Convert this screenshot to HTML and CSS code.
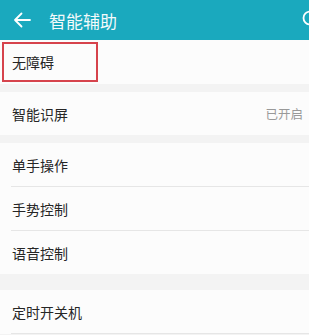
FILE: index.html
```html
<!DOCTYPE html>
<html>
<head>
  <meta charset="UTF-8" />
  <meta name="viewport" content="width=device-width, initial-scale=1.0" />
  <title>智能辅助</title>
  <link rel="stylesheet" href="styles.css">
</head>
<body>
  <div class="topbar">
    <svg class="back" width="18" height="16" viewBox="0 0 18 16">
      <path d="M17 8H2M8.5 1.5L2 8l6.5 6.5" fill="none" stroke="#fff" stroke-width="1.8" stroke-linecap="round" stroke-linejoin="round"/>
    </svg>
    <span class="title">智能辅助</span>
    <svg class="search" width="18" height="18" viewBox="0 0 18 18">
      <circle cx="8" cy="8" r="6.5" fill="none" stroke="#fff" stroke-width="1.8"/>
    </svg>
  </div>

  <div class="group">
    <div class="item marked"><span class="label">无障碍</span></div>
  </div>

  <div class="group">
    <div class="item">
      <span class="label">智能识屏</span>
      <span class="value">已开启</span>
    </div>
  </div>

  <div class="group">
    <div class="item line"><span class="label">单手操作</span></div>
    <div class="item line"><span class="label">手势控制</span></div>
    <div class="item"><span class="label">语音控制</span></div>
  </div>

  <div class="group big">
    <div class="item line"><span class="label">定时开关机</span></div>
  </div>
</body>
</html>
```

FILE: styles.css
```css
body {
  margin: 0;
  width: 309px;
  height: 335px;
  overflow: hidden;
  background-color: #f3f3f3;
  font-family: "Noto Sans CJK SC", "Noto Sans", sans-serif;
  color: #262626;
}

.topbar {
  height: 40px;
  background-color: #1aa9be;
  display: flex;
  align-items: center;
  padding-left: 13px;
  color: #fff;
}

.back {
  display: block;
}

.title {
  margin-left: 18px;
  font-size: 17px;
  flex: 1;
  opacity: 0.95;
}

.search {
  display: block;
  margin-right: -11px;
  margin-top: -3px;
}

.group {
  background-color: #fcfcfc;
  margin-bottom: 8px;
}

.group.big {
  margin-top: 16px;
}

.item {
  height: 43px;
  display: flex;
  align-items: center;
  justify-content: space-between;
  padding: 0 6px 0 12px;
  font-size: 14px;
  position: relative;
}

.item.line {
  height: 44px;
}

.item.line::after {
  content: "";
  position: absolute;
  left: 11px;
  right: 0;
  bottom: 0;
  height: 1px;
  background-color: #e6e6e6;
}

.item.marked {
  height: 44px;
}

.item.marked::before {
  content: "";
  position: absolute;
  left: 2px;
  top: 2px;
  width: 92px;
  height: 36px;
  border: 2.5px solid #d6434c;
}

.value {
  font-size: 12.5px;
  color: #999;
}
```
